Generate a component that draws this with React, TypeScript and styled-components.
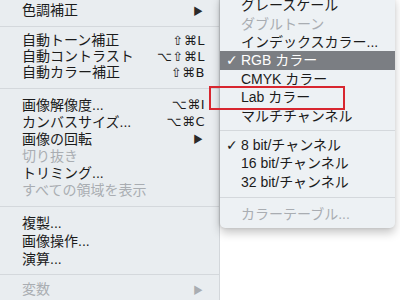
import React, { ReactElement } from 'react';
import styled, { createGlobalStyle } from 'styled-components';

const GlobalStyle = createGlobalStyle`
  html, body {
    margin: 0;
    padding: 0;
    background: #ffffff;
    overflow: hidden;
  }
`;

const Screen = styled.div`
  position: relative;
  display: flex;
  align-items: flex-start;
  width: 400px;
  height: 300px;
  overflow: hidden;
  background: #ffffff;
  font-family: 'Liberation Sans', 'Noto Sans CJK JP', sans-serif;
  font-size: 14px;
`;

const MainMenu = styled.div`
  display: flex;
  flex-direction: column;
  width: 220px;
  height: 300px;
  flex-shrink: 0;
  background: #e9edf0;
  border-right: 1px solid #d3d7db;
  box-sizing: border-box;
`;

const SubMenu = styled.div`
  position: relative;
  display: flex;
  flex-direction: column;
  width: 175px;
  flex-shrink: 0;
  margin-top: -4px;
  padding-bottom: 5px;
  background: #edf1f4;
  border-radius: 0 0 5px 5px;
  box-shadow: 0 5px 10px rgba(0, 0, 0, 0.22), -1px 0 3px rgba(0, 0, 0, 0.12);
  z-index: 1;
`;

const Row = styled.div<{ $h: number; $muted?: boolean; $active?: boolean }>`
  display: flex;
  align-items: center;
  height: ${(p) => p.$h}px;
  padding: 0 14px 0 22px;
  color: ${(p) => (p.$active ? '#ffffff' : p.$muted ? '#a9adb2' : '#1b1b1b')};
  background: ${(p) => (p.$active ? '#7b7e83' : 'transparent')};
  white-space: nowrap;
`;

const SubRow = styled(Row)`
  position: relative;
  padding-left: 21px;
`;

const Label = styled.span`
  flex: 1;
  line-height: 1;
`;

const Shortcut = styled.span`
  font-family: 'DejaVu Sans', 'Liberation Sans', sans-serif;
  font-size: 13px;
  letter-spacing: 0.5px;
  color: #1b1b1b;
`;

const Arrow = styled.span<{ $muted?: boolean }>`
  font-size: 10px;
  color: ${(p) => (p.$muted ? '#a9adb2' : '#2a2a2a')};
  margin-right: 2px;
`;

const Check = styled.span<{ $active?: boolean }>`
  position: absolute;
  left: 6px;
  font-family: 'DejaVu Sans', sans-serif;
  font-weight: bold;
  font-size: 14px;
  color: ${(p) => (p.$active ? '#ffffff' : '#1b1b1b')};
`;

const Separator = styled.div<{ $h: number }>`
  display: flex;
  align-items: center;
  height: ${(p) => p.$h}px;
  &::after {
    content: '';
    flex: 1;
    height: 1px;
    background: #d4d8dc;
  }
`;

const Highlight = styled.div`
  position: absolute;
  left: -11px;
  top: 90px;
  width: 132px;
  height: 20px;
  border: 2px solid #d8262f;
  pointer-events: none;
`;

type Item = { label: string; muted?: boolean; shortcut?: string; arrow?: boolean };

const leftGroups: { h: number; sep: number; items: Item[] }[] = [
  { h: 20, sep: 12, items: [{ label: '色調補正', arrow: true }] },
  {
    h: 16,
    sep: 16,
    items: [
      { label: '自動トーン補正', shortcut: '⇧⌘L' },
      { label: '自動コントラスト', shortcut: '⌥⇧⌘L' },
      { label: '自動カラー補正', shortcut: '⇧⌘B' },
    ],
  },
  {
    h: 17,
    sep: 16,
    items: [
      { label: '画像解像度...', shortcut: '⌥⌘I' },
      { label: 'カンバスサイズ...', shortcut: '⌥⌘C' },
      { label: '画像の回転', arrow: true },
      { label: '切り抜き', muted: true },
      { label: 'トリミング...' },
      { label: 'すべての領域を表示', muted: true },
    ],
  },
  {
    h: 18,
    sep: 12,
    items: [{ label: '複製...' }, { label: '画像操作...' }, { label: '演算...' }],
  },
  { h: 18, sep: 0, items: [{ label: '変数', muted: true, arrow: true }] },
];

type SubItem = { label: string; muted?: boolean; checked?: boolean; active?: boolean };

const subGroups: { items: SubItem[]; sep: number }[] = [
  {
    sep: 11,
    items: [
      { label: 'グレースケール' },
      { label: 'ダブルトーン', muted: true },
      { label: 'インデックスカラー...' },
      { label: 'RGB カラー', checked: true, active: true },
      { label: 'CMYK カラー' },
      { label: 'Lab カラー' },
      { label: 'マルチチャンネル' },
    ],
  },
  {
    sep: 14,
    items: [
      { label: '8 bit/チャンネル', checked: true },
      { label: '16 bit/チャンネル' },
      { label: '32 bit/チャンネル' },
    ],
  },
  { sep: 0, items: [{ label: 'カラーテーブル...', muted: true }] },
];

const App = (): ReactElement => {
  return (
    <>
      <GlobalStyle />
      <Screen>
        <MainMenu>
          {leftGroups.map((g, gi) => (
            <React.Fragment key={gi}>
              {g.items.map((it) => (
                <Row key={it.label} $h={g.h} $muted={it.muted}>
                  <Label>{it.label}</Label>
                  {it.shortcut && <Shortcut>{it.shortcut}</Shortcut>}
                  {it.arrow && <Arrow $muted={it.muted}>▶</Arrow>}
                </Row>
              ))}
              {g.sep > 0 && <Separator $h={g.sep} />}
            </React.Fragment>
          ))}
        </MainMenu>
        <SubMenu>
          {subGroups.map((g, gi) => (
            <React.Fragment key={gi}>
              {g.items.map((it) => (
                <SubRow key={it.label} $h={18.4} $muted={it.muted} $active={it.active}>
                  {it.checked && <Check $active={it.active}>✓</Check>}
                  <Label>{it.label}</Label>
                </SubRow>
              ))}
              {g.sep > 0 && <Separator $h={g.sep} />}
            </React.Fragment>
          ))}
          <Highlight />
        </SubMenu>
      </Screen>
    </>
  );
};

export default App;
